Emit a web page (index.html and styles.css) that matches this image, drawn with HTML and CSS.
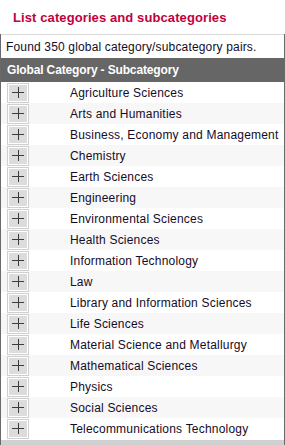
FILE: index.html
```html
<!DOCTYPE html>
<html>
<head>
<meta charset="utf-8">
<link rel="stylesheet" href="styles.css">
</head>
<body>
<div class="page">
  <h1 class="title">List categories and subcategories</h1>
  <div class="panel">
    <p class="found">Found 350 global category/subcategory pairs.</p>
    <div class="thead">Global Category - Subcategory</div>
    <ul class="rows">
      <li class="row"><span class="btn"></span><span class="name">Agriculture Sciences</span></li>
      <li class="row"><span class="btn"></span><span class="name">Arts and Humanities</span></li>
      <li class="row"><span class="btn"></span><span class="name">Business, Economy and Management</span></li>
      <li class="row"><span class="btn"></span><span class="name">Chemistry</span></li>
      <li class="row"><span class="btn"></span><span class="name">Earth Sciences</span></li>
      <li class="row"><span class="btn"></span><span class="name">Engineering</span></li>
      <li class="row"><span class="btn"></span><span class="name">Environmental Sciences</span></li>
      <li class="row"><span class="btn"></span><span class="name">Health Sciences</span></li>
      <li class="row"><span class="btn"></span><span class="name">Information Technology</span></li>
      <li class="row"><span class="btn"></span><span class="name">Law</span></li>
      <li class="row"><span class="btn"></span><span class="name">Library and Information Sciences</span></li>
      <li class="row"><span class="btn"></span><span class="name">Life Sciences</span></li>
      <li class="row"><span class="btn"></span><span class="name">Material Science and Metallurgy</span></li>
      <li class="row"><span class="btn"></span><span class="name">Mathematical Sciences</span></li>
      <li class="row"><span class="btn"></span><span class="name">Physics</span></li>
      <li class="row"><span class="btn"></span><span class="name">Social Sciences</span></li>
      <li class="row"><span class="btn"></span><span class="name">Telecommunications Technology</span></li>
    </ul>
    <div class="foot"></div>
  </div>
</div>
</body>
</html>
```
FILE: styles.css
```css
html, body {
  margin: 0;
  padding: 0;
  background: #fff;
}
.page {
  width: 285px;
  height: 445px;
  overflow: hidden;
  font-family: "Liberation Sans", Arial, sans-serif;
  font-size: 12px;
  color: #140c28;
}
.title {
  margin: 0;
  padding: 10px 0 0 13px;
  height: 34px;
  box-sizing: border-box;
  font-size: 13px;
  font-weight: bold;
  letter-spacing: 0.1px;
  color: #c2003c;
  line-height: 16px;
}
.panel {
  border-left: 1px solid #6a6a6a;
  border-right: 1px solid #6a6a6a;
  height: 411px;
  box-sizing: border-box;
  display: flex;
  flex-direction: column;
}
.found {
  margin: 0;
  border-top: 1px solid #dadada;
  padding: 5px 0 0 5px;
  height: 24px;
  flex: none;
  box-sizing: border-box;
  line-height: 14px;
  letter-spacing: 0.16px;
}
.thead {
  background: #666;
  color: #fff;
  font-weight: bold;
  height: 24px;
  flex: none;
  line-height: 25px;
  padding-left: 6px;
  letter-spacing: -0.15px;
}
.rows {
  list-style: none;
  margin: 0;
  padding: 0;
  flex: none;
}
.row {
  display: flex;
  align-items: center;
  height: 21px;
  background: #fff;
}
.row:nth-child(even) {
  background: #f7f7f7;
}
.btn {
  width: 20px;
  height: 18px;
  margin-left: 6px;
  border: 1px solid #cfcfcf;
  box-shadow: inset 0 0 0 1px #fff;
  background: #dcdcdc;
  position: relative;
  flex: none;
}
.btn::before, .btn::after {
  content: "";
  position: absolute;
  background: #3c3c3c;
}
.btn::before {
  left: 4px;
  top: 8px;
  width: 12px;
  height: 1px;
}
.btn::after {
  left: 10px;
  top: 3px;
  width: 1px;
  height: 11px;
}
.name {
  margin-left: 41px;
  white-space: nowrap;
  letter-spacing: 0.2px;
}
.foot {
  flex: 1;
  border-top: 1px solid #fff;
  background: #d0d0d0;
}
```
